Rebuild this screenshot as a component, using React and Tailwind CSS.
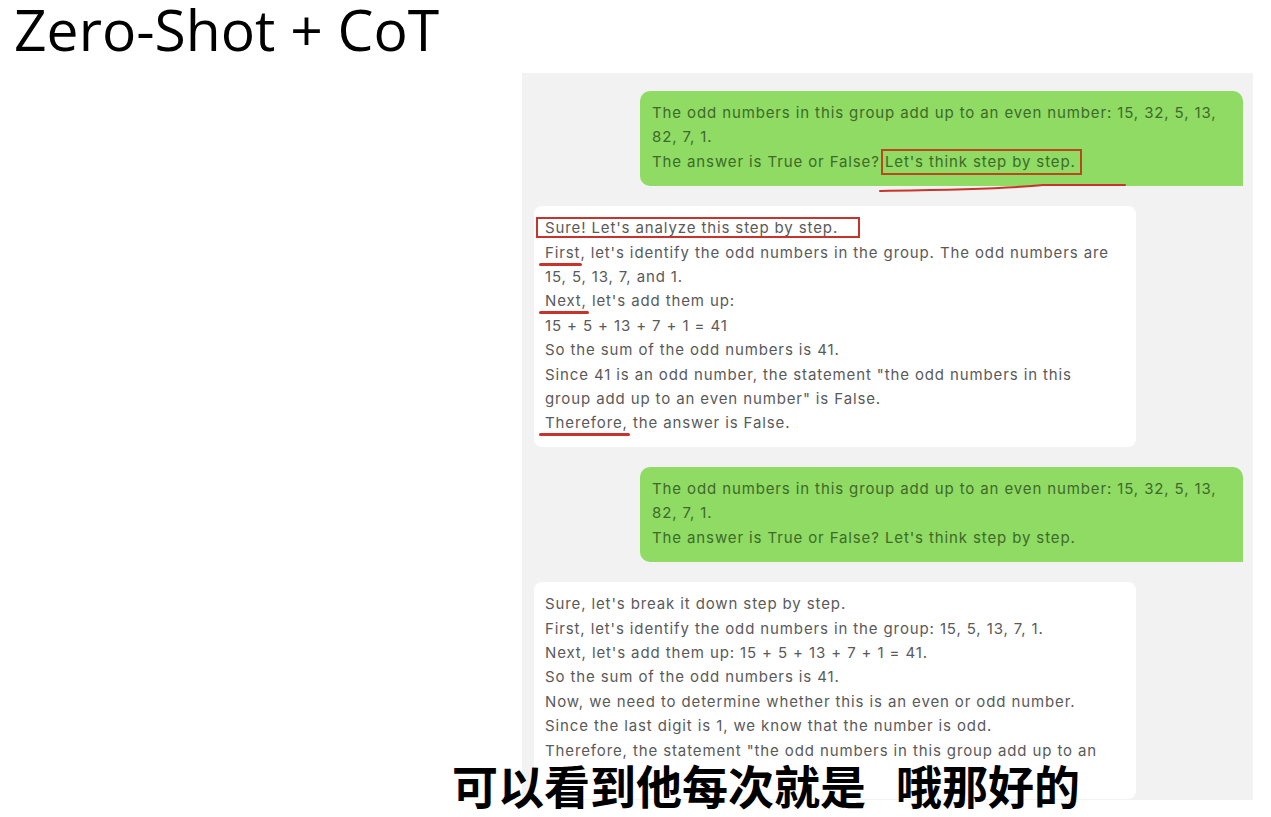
import React from "react";

const Mark = ({ children }) => (
  <span className="relative">
    {children}
    <span className="absolute left-[-6px] right-[-2px] bottom-[-4px] h-[3px] rounded-full bg-[#c8342b]" />
  </span>
);

const App = () => {
  return (
    <div className="relative w-[1271px] h-[817px] bg-white overflow-hidden">
      <h1 className="pl-[14px] pt-[1px] text-[57px] leading-[56px] text-black font-['Open_Sans',sans-serif]">
        Zero-Shot + CoT
      </h1>

      {/* chat panel */}
      <div className="ml-[522px] mt-[16px] w-[731px] h-[727px] bg-[#f2f2f2] overflow-hidden pt-[18px] pl-[12px] pr-[10px] flex flex-col gap-[20px] font-['Inter',sans-serif] text-[15px] leading-[24.4px] tracking-[0.88px]">
        <div className="relative self-end w-[603px] bg-[#8fdb63] text-[#3d6a2a] rounded-t-[10px] rounded-bl-[10px] px-[12px] pt-[10px] pb-[12px]">
          <div className="whitespace-nowrap">The odd numbers in this group add up to an even number: 15, 32, 5, 13,</div>
          <div>82, 7, 1.</div>
          <div className="whitespace-nowrap">
            The answer is True or False?{" "}
            <span className="relative">
              Let's think step by step.
              <span className="absolute left-[-4px] right-[-6px] top-[-3px] bottom-[-4px] border-2 border-[#b9471f]" />
            </span>
          </div>
          <svg className="absolute left-[238px] top-[90px] overflow-visible" width="250" height="12" viewBox="0 0 250 12">
            <path d="M2 10 C 60 9, 130 8, 165 4 L 247 4" fill="none" stroke="#c8342b" strokeWidth="2" strokeLinecap="round" />
          </svg>
        </div>

        <div className="w-[602px] bg-white text-[#5a5a5a] rounded-[8px] px-[11px] pt-[10px] pb-[11px]">
          <div className="whitespace-nowrap">
            <span className="relative">
              Sure! Let's analyze this step by step.
              <span className="absolute left-[-9px] right-[-22px] top-[-1px] bottom-[-1px] border-2 border-[#c8342b]" />
            </span>
          </div>
          <div className="whitespace-nowrap">
            <Mark>First</Mark>, let's identify the odd numbers in the group. The odd numbers are
          </div>
          <div>15, 5, 13, 7, and 1.</div>
          <div>
            <Mark>Next,</Mark> let's add them up:
          </div>
          <div>15 + 5 + 13 + 7 + 1 = 41</div>
          <div>So the sum of the odd numbers is 41.</div>
          <div className="whitespace-nowrap">Since 41 is an odd number, the statement "the odd numbers in this</div>
          <div>group add up to an even number" is False.</div>
          <div>
            <Mark>Therefore,</Mark> the answer is False.
          </div>
        </div>

        <div className="self-end w-[603px] bg-[#8fdb63] text-[#3d6a2a] rounded-t-[10px] rounded-bl-[10px] px-[12px] pt-[10px] pb-[12px]">
          <div className="whitespace-nowrap">The odd numbers in this group add up to an even number: 15, 32, 5, 13,</div>
          <div>82, 7, 1.</div>
          <div className="whitespace-nowrap">The answer is True or False? Let's think step by step.</div>
        </div>

        <div className="shrink-0 w-[602px] bg-white text-[#5a5a5a] rounded-[8px] px-[11px] pt-[10px] pb-[36px]">
          <div>Sure, let's break it down step by step.</div>
          <div>First, let's identify the odd numbers in the group: 15, 5, 13, 7, 1.</div>
          <div>Next, let's add them up: 15 + 5 + 13 + 7 + 1 = 41.</div>
          <div>So the sum of the odd numbers is 41.</div>
          <div>Now, we need to determine whether this is an even or odd number.</div>
          <div>Since the last digit is 1, we know that the number is odd.</div>
          <div className="whitespace-nowrap">Therefore, the statement "the odd numbers in this group add up to an</div>
        </div>
      </div>

      {/* subtitle */}
      <div className="absolute left-[452px] top-[762px] flex gap-[30px] text-[46px] leading-[44px] font-bold text-black font-['Noto_Sans_CJK_SC',sans-serif] [text-shadow:0_0_2px_#fff]">
        <span>可以看到他每次就是</span>
        <span>哦那好的</span>
      </div>
    </div>
  );
};

export default App;
